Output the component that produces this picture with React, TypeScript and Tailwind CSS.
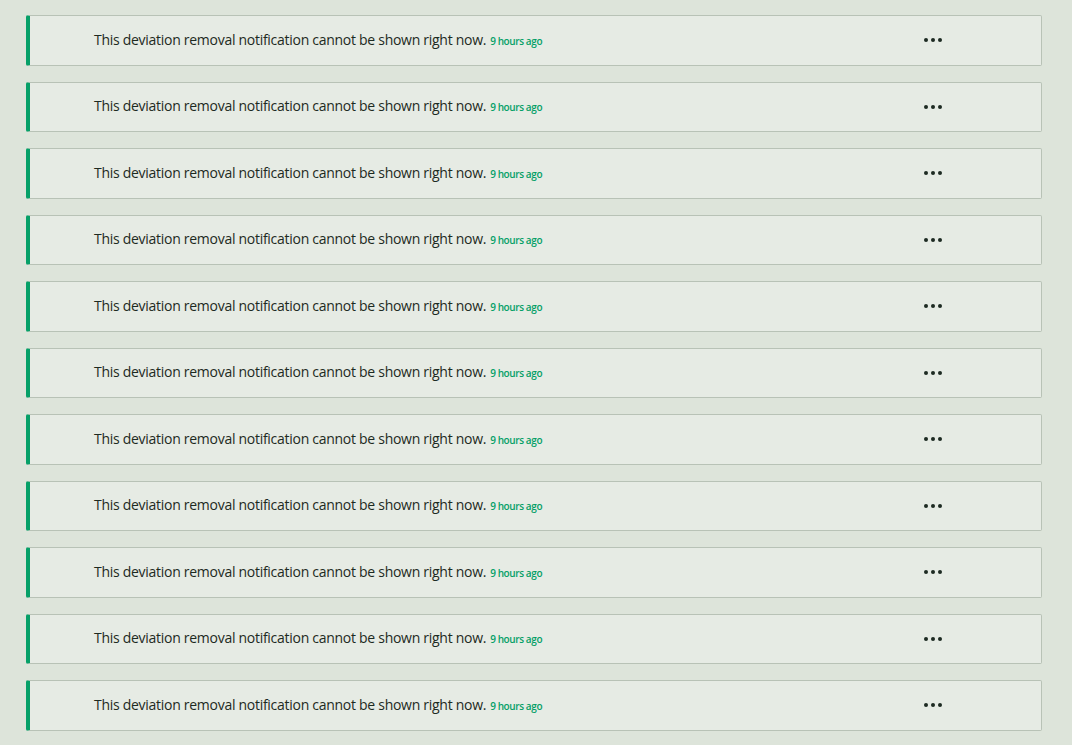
export default function App() {
  const rows = Array.from({ length: 11 })
  return (
    <div className="min-h-screen bg-[#dde4da] px-[26px] pt-[15px] pb-4" style={{ fontFamily: '"Open Sans", "Noto Sans", sans-serif' }}>
      <div className="w-[1016px] flex flex-col gap-4">
        {rows.map((_, i) => (
          <div key={i} className="h-[50.5px] flex items-center bg-[#e6ebe4] border border-[#b8c2b6] border-l-4 border-l-[#06a068] rounded-[2px]">
            <div className="pl-[64px] pb-[2px] flex-1 flex items-baseline gap-1">
              <span className="text-[14px] text-[#1d2a22] tracking-[-0.28px]">This deviation removal notification cannot be shown right now.</span>
              <span className="text-[10px] font-semibold text-[#06a068] tracking-[-0.4px]">9 hours ago</span>
            </div>
            <div className="w-[100px] mr-[58px] flex justify-center gap-[3px]">
              <span className="w-[4px] h-[4px] rounded-full bg-[#1d2a22]" />
              <span className="w-[4px] h-[4px] rounded-full bg-[#1d2a22]" />
              <span className="w-[4px] h-[4px] rounded-full bg-[#1d2a22]" />
            </div>
          </div>
        ))}
      </div>
    </div>
  )
}
